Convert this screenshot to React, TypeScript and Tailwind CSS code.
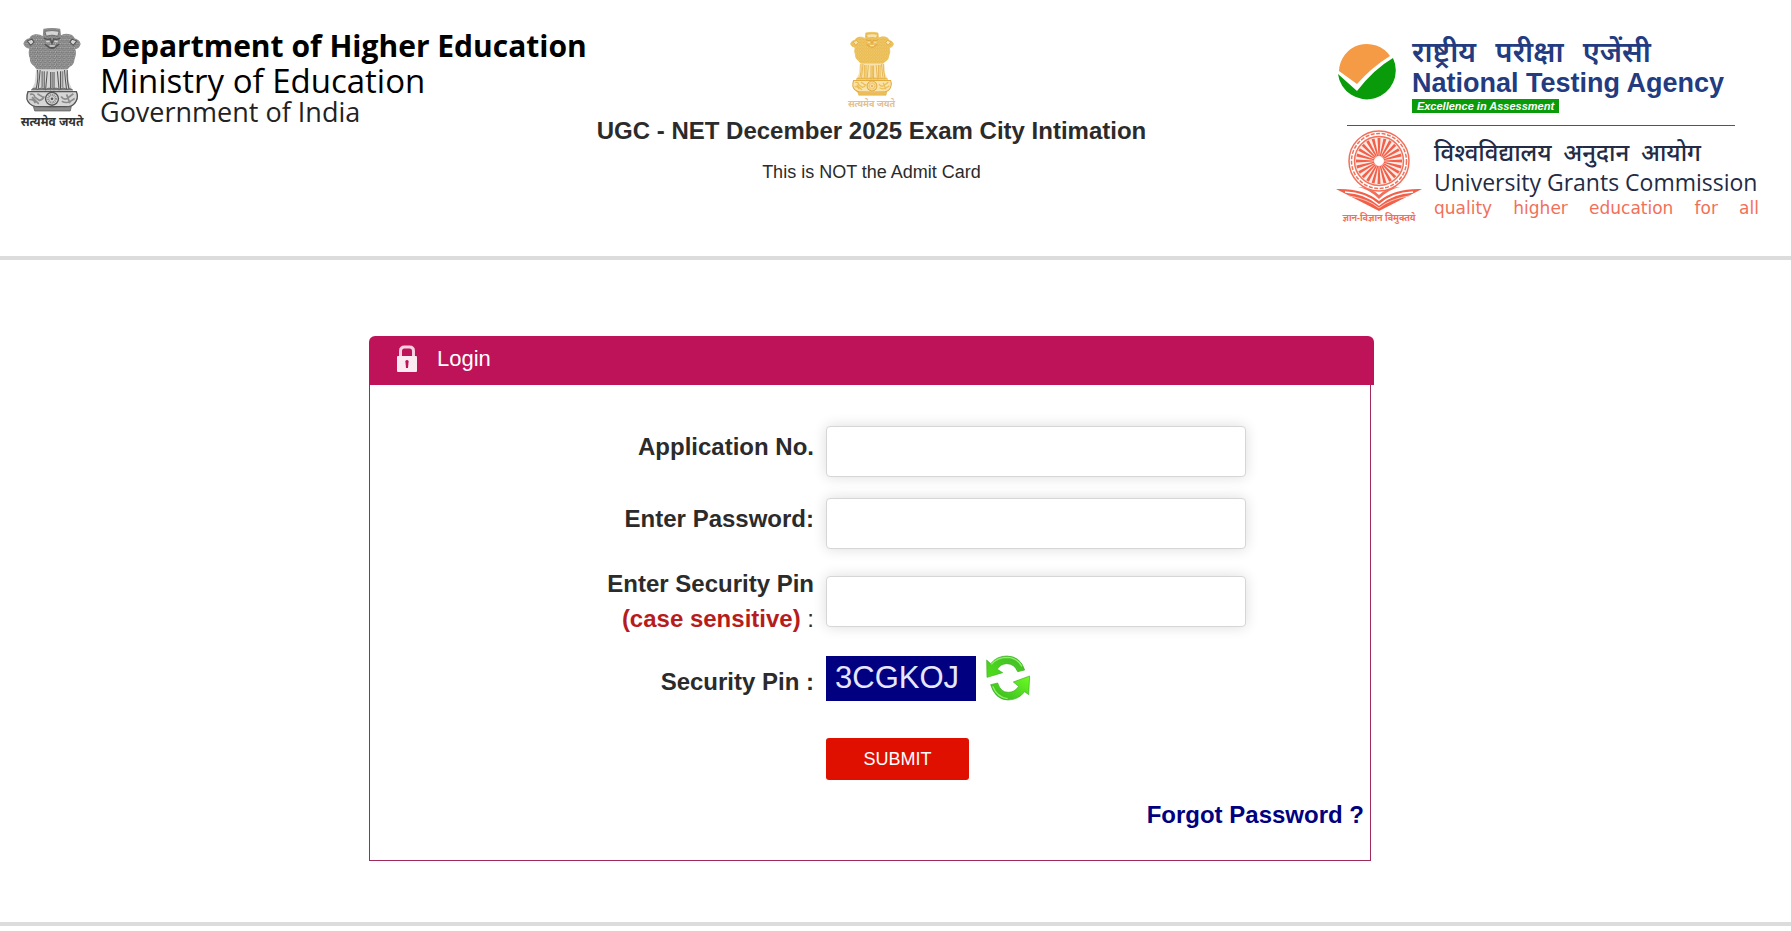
import { useState } from 'react';

interface EmblemProps {
  id: string;
  className: string;
  dark: string;
  mid: string;
  light: string;
}

function Emblem({ id, className, dark, mid, light }: EmblemProps) {
  return (
    <svg viewBox="46 20 170 248" className={className} aria-hidden="true">
      <defs>
        <pattern id={id} width="14" height="12" patternUnits="userSpaceOnUse">
          <rect width="14" height="12" fill={mid} />
          <path d="M1 1q3 6 6 1M8 7q3 5 6 0M3 9l3-2M10 3l3-2" stroke={dark} strokeWidth="1.5" fill="none" />
          <path d="M7 5l3 2M0 6l3 1M12 10l2 1M4 2l2 1" stroke={light} strokeWidth="2" fill="none" />
        </pattern>
      </defs>
      {/* Lion manes */}
      <path
        d="M107 24q24-5 47 0l2 20q12-8 27-4 10 2 14 12 14 4 17 15-3 13-16 14 5 16-2 31-1 16-14 22-12 14-25 10-14 8-27 8t-26-8q-16 2-24-12-14-8-13-24-6-12-1-28-14-2-18-14 4-12 17-14 5-11 17-12 12-1 23 6z"
        fill={`url(#${id})`}
        stroke={mid}
        strokeWidth="3"
      />
      <path d="M110 30q21-5 42 0l-4 14q-17-6-34 0z" fill={light} stroke={dark} strokeWidth="2" />
      <path d="M107 50q9 6 19 2l5 14 5-14q10 4 19-2M110 67q20 22 42 0M120 76q11 8 22 0" fill="none" stroke={dark} strokeWidth="4" />
      <path d="M114 60h10M138 60h10M124 73h15" stroke={light} strokeWidth="4" />
      <path d="M58 58l14-5 6 9-10 9zM204 58l-14-5-6 9 10 9z" fill={light} stroke={dark} strokeWidth="3" />
      {/* Legs */}
      <path d="M84 142l-4 40-10 22h122l-10-22-5-40z" fill={light} />
      <path d="M88 144q4 24-4 56M96 144q-2 28-6 58M108 148v54M117 148l-5 56M127 150v54M137 150v54M147 148l5 56M156 148v54M168 144q2 28 6 58M176 144q-2 26 5 56" stroke={dark} strokeWidth="3" fill="none" />
      <path d="M102 148v48M132 150v48M162 148v48" stroke={mid} strokeWidth="5" />
      <path d="M70 203q8-10 18-2 12-8 24 0 10-6 20-2 12-4 22 2 12-8 20 0 10-6 18 2z" fill={mid} stroke={dark} strokeWidth="2" />
      {/* Abacus with the wheel */}
      <path d="M60 208h143q6 14 0 26-6 15-22 18H82q-20-5-25-22-1-12 3-22z" fill={light} stroke={dark} strokeWidth="4" />
      <path d="M66 216q12-4 14 8l14 10q10-2 14-12M64 232q12-4 18 10M72 224l20 20M88 214l16 10M158 222q8 12 18 6l18-14M160 236q14 8 26 0l12-8M174 216l10 26" fill="none" stroke={mid} strokeWidth="5" />
      <circle cx="131" cy="229" r="19" fill={light} stroke={dark} strokeWidth="4" />
      <circle cx="131" cy="229" r="11" fill="none" stroke={mid} strokeWidth="7" strokeDasharray="3 2" />
      <circle cx="131" cy="229" r="4" fill={dark} />
      <path d="M76 252q55 6 112 0l-3 13H80z" fill={mid} stroke={dark} strokeWidth="2" />
    </svg>
  );
}

function NtaMark() {
  return (
    <svg viewBox="0 0 58 58" className="mt-2 size-[58px] shrink-0" aria-hidden="true">
      <path d="M1 28A28 28 0 0 1 52 13Q34 24 19 41Z" fill="#f59a45" />
      <path d="M0 31L19 48Q36 26 55 15A29 29 0 1 1 0 31Z" fill="#0a9b0a" />
    </svg>
  );
}

function UgcMark() {
  const spokes = Array.from({ length: 24 }, (_, i) => i * 15);
  return (
    <svg viewBox="0 0 86 82" className="h-[82px] w-[86px]" fill="none" aria-hidden="true">
      <circle cx="43" cy="31" r="30" stroke="#f2705a" strokeWidth="1.5" />
      <circle cx="43" cy="31" r="27.5" stroke="#f2705a" strokeWidth="1.5" strokeDasharray="4 1.5" />
      <circle cx="43" cy="31" r="24.5" fill="#fdece7" stroke="#f2705a" strokeWidth="1.5" />
      {spokes.map((angle) => (
        <path key={angle} d="M42.4 26L41.5 8h3l-.9 18z" fill="#f2604a" transform={`rotate(${angle} 43 31)`} />
      ))}
      <circle cx="43" cy="31" r="4" fill="#fff" />
      <path d="M22 57q12 0 21 8 9-8 21-8-11 2-21 12-10-10-21-12z" fill="#f2705a" />
      <path d="M0 59q27-1 43 12Q59 58 86 59L43 81z" fill="#f2604a" />
      <path d="M9 62q21 1 34 13 13-12 34-13" stroke="#fff" strokeWidth="1.5" />
      <path d="M13 66q19 3 30 12 11-9 30-12" stroke="#fbc9bd" strokeWidth="1" />
    </svg>
  );
}

function LockIcon() {
  return (
    <svg viewBox="0 0 20 27" className="h-[27px] w-5" aria-hidden="true">
      <path d="M3.500 12V6q0-4 4-4h5q4 0 4 4v6" fill="none" stroke="#f6cfe0" strokeWidth="3" />
      <rect y="11" width="20" height="16" rx="1" fill="#fbeaf2" />
      <path d="M8.500 17.500a1.700 1.700 0 1 1 3 0L11 23H9z" fill="#be1259" />
    </svg>
  );
}

function RefreshIcon() {
  return (
    <svg viewBox="0 0 132 136" className="h-[46px] w-11" aria-hidden="true">
      <defs>
        <linearGradient id="refreshTop" x1="0" y1="1" x2="1" y2="0">
          <stop offset="0" stopColor="#4fe018" />
          <stop offset="1" stopColor="#43b82c" />
        </linearGradient>
        <linearGradient id="refreshBottom" x1="0" y1="1" x2="1" y2="0">
          <stop offset="0" stopColor="#35b020" />
          <stop offset="1" stopColor="#6bff22" />
        </linearGradient>
      </defs>
      <path d="M2 14L14 25Q32 2 63 2 103 3 116 44L95 49Q85 25 62 25 43 26 34 42L50 52 3 66Z" fill="url(#refreshTop)" stroke="#3fae25" strokeWidth="2" />
      <path d="M16 27Q34 6 63 6q30 1 45 27" fill="none" stroke="#8df06a" strokeWidth="4" />
      <path d="M131 62L128 118 116 109Q97 134 65 134 27 132 14 88L35 83Q44 111 66 111 87 111 98 93L82 80Z" fill="url(#refreshBottom)" stroke="#3fae25" strokeWidth="2" />
      <path d="M20 93q14 34 45 37" fill="none" stroke="#8df06a" strokeWidth="4" />
    </svg>
  );
}

const hindi = "font-['Noto_Sans','Noto_Sans_Devanagari',sans-serif]";
const labelClass = 'pt-[3px] text-right text-2xl leading-[35px] font-bold';
const inputClass =
  'h-[51px] w-[420px] max-w-full rounded border border-[#d6d6d6] bg-white px-3 text-lg shadow-[0_0_14px_rgba(0,0,0,0.14)] outline-none focus:border-[#be1259]';

function Header() {
  return (
    <header className="grid grid-cols-[1fr_auto_1fr] border-b-4 border-[#dcdcdc] pr-12 pb-8">
      <div className="flex items-start gap-4 pt-7 pl-5">
        <div className="flex w-16 flex-col items-center">
          <Emblem id="mane-grey" className="h-[84px] w-[58px]" dark="#555" mid="#8c8c8c" light="#d6d6d6" />
          <span className={`text-xs leading-5 font-bold whitespace-nowrap text-[#333] ${hindi}`}>सत्यमेव जयते</span>
        </div>
        <div className="font-['Open_Sans',sans-serif] whitespace-nowrap text-black">
          <p className="text-[30px] leading-[35px] font-bold">Department of Higher Education</p>
          <p className="text-[33px] leading-[35px]">Ministry of Education</p>
          <p className="text-[27px] leading-7 text-[#222]">Government of India</p>
        </div>
      </div>

      <div className="flex flex-col items-center pt-[30px]">
        <Emblem id="mane-gold" className="h-[68px] w-11" dark="#e3aa40" mid="#ecbf55" light="#f8e3ad" />
        <span className={`text-[9px] leading-3 font-bold text-[#e3c091] ${hindi}`}>सत्यमेव जयते</span>
        <h1 className="mt-[5px] text-2xl font-bold">UGC - NET December 2025 Exam City Intimation</h1>
        <p className="mt-[11px] text-lg">This is NOT the Admit Card</p>
      </div>

      <div className="-mr-4 flex flex-col items-end pt-[35px]">
        <div className="w-[421px]">
          <div className="flex items-start gap-4">
            <NtaMark />
            <div className="text-[#233b80]">
              <p className={`flex w-[239px] justify-between text-[29px] leading-8 font-semibold ${hindi}`}>
                <span>राष्ट्रीय</span> <span>परीक्षा</span> <span>एजेंसी</span>
              </p>
              <p className="text-[27px] leading-8 font-bold">National Testing Agency</p>
              <p className="w-[147px] bg-[#0a9b0a] text-center text-[11px] leading-[14px] font-bold text-white italic">
                Excellence in Assessment
              </p>
            </div>
          </div>
          <hr className="mt-3 mr-6 ml-[9px] border-[#555]" />
          <div className="-ml-[2px] flex gap-3 pt-1">
            <div className="flex w-[86px] flex-col items-center">
              <UgcMark />
              <span className={`text-[9px] leading-3 font-bold whitespace-nowrap text-[#f2705a] ${hindi}`}>ज्ञान-विज्ञान विमुक्तये</span>
            </div>
            <div className="flex-1 pt-1.5">
              <p className={`flex w-[267px] justify-between text-2xl leading-8 font-medium text-[#232b45] ${hindi}`}>
                <span>विश्वविद्यालय</span> <span>अनुदान</span> <span>आयोग</span>
              </p>
              <p className="font-['Open_Sans',sans-serif] text-[23px] leading-7 whitespace-nowrap text-[#232b45]">University Grants Commission</p>
              <p className="flex justify-between font-['DejaVu_Sans',sans-serif] text-[17px] leading-6 text-[#f2705a]">
                <span>quality</span> <span>higher</span> <span>education</span> <span>for</span> <span>all</span>
              </p>
            </div>
          </div>
        </div>
      </div>
    </header>
  );
}

export default function App() {
  const [applicationNo, setApplicationNo] = useState('');
  const [password, setPassword] = useState('');
  const [pin, setPin] = useState('');

  return (
    <div className="bg-white font-['Liberation_Sans',Arial,sans-serif] text-[#2b2b2b]">
      <Header />

      <main className="border-b-4 border-[#dcdcdc] pt-[76px] pr-12 pb-[61px]">
        <section className="mx-auto max-w-[1005px]">
          <div className="flex h-[49px] items-center gap-5 rounded-t-md bg-[#be1259] pb-1 pl-7 text-white">
            <LockIcon />
            <h2 className="text-[22px]">Login</h2>
          </div>

          <form
            onSubmit={(e) => e.preventDefault()}
            className="mr-[3px] border border-t-0 border-[#a12a5c] pt-[41px] pb-7"
          >
            <div className="grid grid-cols-[444fr_544fr] gap-x-3">
              <label htmlFor="applicationNo" className={labelClass}>Application No.</label>
              <input
                id="applicationNo"
                type="text"
                value={applicationNo}
                onChange={(e) => setApplicationNo(e.target.value)}
                className={inputClass}
              />

              <label htmlFor="password" className={`mt-[21px] ${labelClass}`}>Enter Password:</label>
              <input
                id="password"
                type="password"
                value={password}
                onChange={(e) => setPassword(e.target.value)}
                className={`mt-[21px] ${inputClass}`}
              />

              <label htmlFor="pin" className={`mt-[14px] ${labelClass}`}>
                Enter Security Pin
                <br />
                <span className="text-[#b71c1c]">(case sensitive)</span> <span className="font-normal">:</span>
              </label>
              <input
                id="pin"
                type="text"
                value={pin}
                onChange={(e) => setPin(e.target.value)}
                className={`mt-[27px] ${inputClass}`}
              />

              <span className={`mt-[25px] ${labelClass}`}>Security Pin :</span>
              <div className="mt-[19px] flex items-center gap-[10px]">
                <span className="flex h-[45px] w-[150px] items-center bg-[#000080] pl-[9px] text-[31px] text-[#e6e6ff]">3CGKOJ</span>
                <button type="button" aria-label="Refresh security pin">
                  <RefreshIcon />
                </button>
              </div>

              <button
                type="submit"
                className="col-start-2 mt-[37px] h-[42px] w-[143px] rounded-[3px] bg-[#e01000] text-lg text-white"
              >
                SUBMIT
              </button>
            </div>

            <div className="mt-[17px] pr-1.5 text-right">
              <a href="#forgot" className="text-2xl leading-[35px] font-bold text-[#000080]">Forgot Password ?</a>
            </div>
          </form>
        </section>
      </main>
    </div>
  );
}
